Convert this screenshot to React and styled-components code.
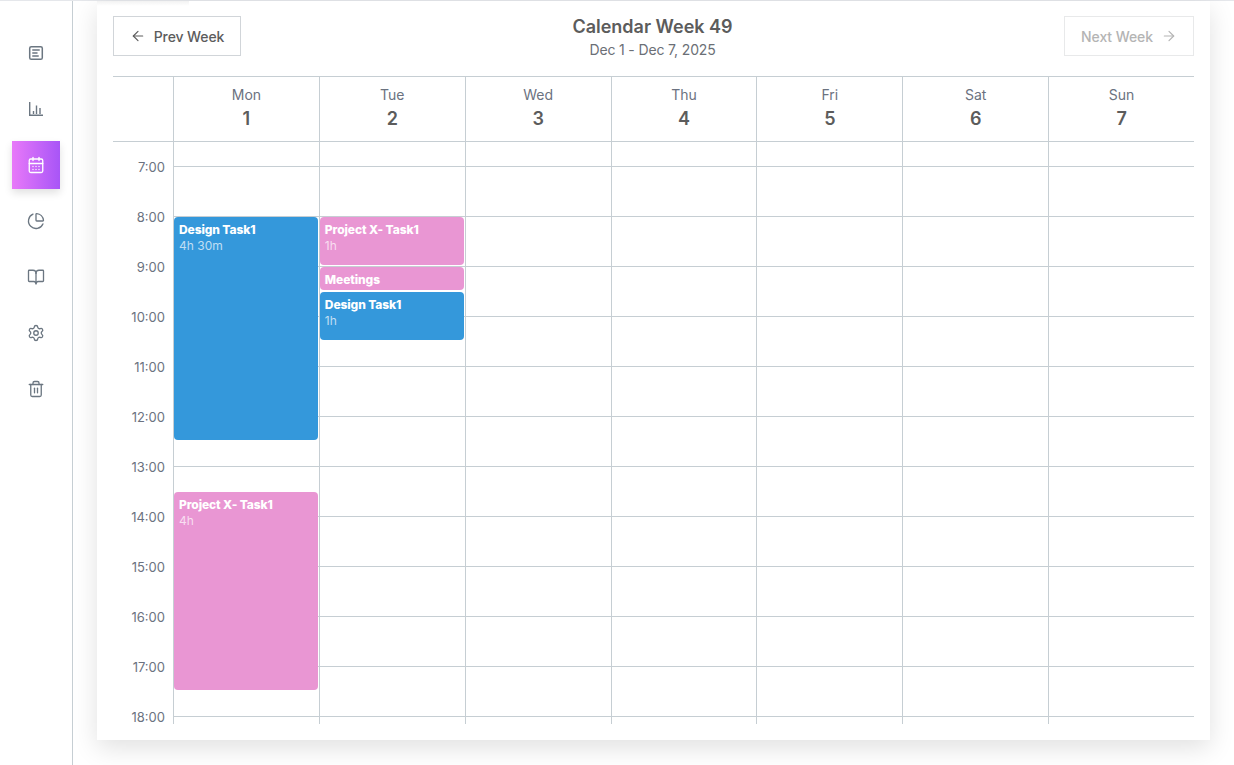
import React from 'react';
import styled, { createGlobalStyle } from 'styled-components';
import {
  ArrowLeft,
  ArrowRight,
  BookOpen,
  CalendarDays,
  ChartPie,
  Settings,
  Trash2,
} from 'lucide-react';

const HOUR = 50;
const GRID_START = 7;
const LINE = '#c6ced3';

const GlobalStyle = createGlobalStyle`
  html, body {
    margin: 0;
    height: 100%;
    background: #fff;
    overflow: hidden;
  }
  body {
    font-family: 'Inter', 'Liberation Sans', sans-serif;
    color: #5c5c5c;
  }
  * { box-sizing: border-box; }
`;

const Page = styled.div`
  display: flex;
  height: 765px;
  border-top: 1px solid #e5e7eb;
`;

const Sidebar = styled.nav`
  flex: 0 0 73px;
  display: flex;
  flex-direction: column;
  gap: 8px;
  align-items: center;
  padding-top: 28px;
  border-right: 1px solid ${LINE};
`;

const NavItem = styled.a`
  width: 48px;
  height: 48px;
  display: flex;
  align-items: center;
  justify-content: center;
  color: ${(p) => (p.$active ? '#fff' : '#6b7681')};
  background: ${(p) => (p.$active ? 'linear-gradient(90deg, #e879f9, #a855f7)' : 'transparent')};
  box-shadow: ${(p) => (p.$active ? '0 4px 8px rgba(0, 0, 0, 0.12)' : 'none')};
`;

const Main = styled.main`
  flex: 1;
  padding: 0 24px;
`;

const Card = styled.section`
  position: relative;
  height: 739px;
  padding: 15px 16px 0;
  background: #fff;
  box-shadow: 0 8px 24px rgba(0, 0, 0, 0.12);

  &::before {
    content: '';
    position: absolute;
    top: 0;
    left: 0;
    width: 92px;
    height: 5px;
    background: linear-gradient(180deg, rgba(0, 0, 0, 0.05), rgba(0, 0, 0, 0));
  }
`;

const TopBar = styled.header`
  display: flex;
  justify-content: space-between;
  align-items: flex-start;
  height: 60px;
`;

const WeekButton = styled.button`
  width: ${(p) => (p.disabled ? '130px' : '128px')};
  height: 40px;
  display: flex;
  align-items: center;
  justify-content: center;
  gap: 8px;
  padding: 0;
  background: #fff;
  border: 1px solid ${(p) => (p.disabled ? '#e8e9ea' : '#d1d5d9')};
  color: ${(p) => (p.disabled ? '#b4b4b4' : '#5c5c5c')};
  font: 500 14px 'Inter', 'Liberation Sans', sans-serif;
  letter-spacing: -0.1px;
`;

const Heading = styled.div`
  text-align: center;
`;

const Title = styled.h1`
  margin: 0;
  font-size: 18px;
  line-height: 22px;
  font-weight: 600;
  color: #5c5c5c;
`;

const Range = styled.p`
  margin: 2px 0 0;
  font-size: 14px;
  line-height: 20px;
  letter-spacing: -0.15px;
  color: #6b6f76;
`;

const Grid = styled.div`
  display: grid;
  grid-template-columns: 60px repeat(7, 1fr);
`;

const Corner = styled.div`
  height: 66px;
  border-top: 1px solid ${LINE};
  border-bottom: 1px solid ${LINE};
`;

const DayHead = styled.div`
  height: 66px;
  display: flex;
  flex-direction: column;
  align-items: center;
  padding-top: 9px;
  border-top: 1px solid ${LINE};
  border-bottom: 1px solid ${LINE};
  border-left: 1px solid ${LINE};
`;

const DayName = styled.span`
  font-size: 14px;
  line-height: 18px;
  color: #6b7280;
`;

const DayNumber = styled.span`
  margin-top: 1px;
  font-size: 18px;
  line-height: 28px;
  font-weight: 600;
  color: #5c5c5c;
`;

const TimeColumn = styled.div`
  height: 582px;
`;

const TimeLabel = styled.div`
  height: ${HOUR}px;
  padding: 1px 8px 0 0;
  margin-top: ${(p) => (p.$first ? '-1px' : '0')};
  display: flex;
  align-items: center;
  justify-content: flex-end;
  font-size: 13px;
  color: #6b7280;
`;

const DayColumn = styled.div`
  position: relative;
  height: 582px;
  border-left: 1px solid ${LINE};
`;

const HourCell = styled.div`
  height: ${(p) => (p.$first ? HOUR / 2 : HOUR)}px;
  border-bottom: 1px solid ${LINE};
`;

const Event = styled.div`
  position: absolute;
  left: 0;
  right: 1px;
  padding: 5px;
  overflow: hidden;
  border-radius: 4px;
  font-size: 12px;
  line-height: 16px;
  background: ${(p) => (p.$kind === 'design' ? '#3498db' : '#e996d3')};
`;

const EventTitle = styled.div`
  font-weight: 800;
  letter-spacing: -0.1px;
  color: #fff;
`;

const EventLength = styled.div`
  color: rgba(255, 255, 255, 0.7);
`;

const NotesIcon = () => (
  <svg width="18" height="18" viewBox="0 0 18 18" fill="none" stroke="currentColor" strokeWidth="1.5" strokeLinecap="round">
    <rect x="2.7" y="2.7" width="12.6" height="12.6" rx="1.6" />
    <path d="M5.8 6h6.4M5.8 9h4.2M5.8 12h5.4" />
  </svg>
);

const BarsIcon = () => (
  <svg width="18" height="18" viewBox="0 0 18 18" fill="none" stroke="currentColor" strokeWidth="1.4">
    <path d="M2.7 2v13.3H16" />
    <path d="M6.5 11v3M9.5 5.5V14M13 8v6" />
  </svg>
);

const navIcons = [
  <NotesIcon key="notes" />,
  <BarsIcon key="chart" />,
  <CalendarDays key="calendar" size={18} strokeWidth={1.75} />,
  <ChartPie key="pie" size={18} strokeWidth={1.75} />,
  <BookOpen key="book" size={18} strokeWidth={1.75} />,
  <Settings key="settings" size={18} strokeWidth={1.75} />,
  <Trash2 key="trash" size={18} strokeWidth={1.75} />,
];

const days = [
  ['Mon', 1],
  ['Tue', 2],
  ['Wed', 3],
  ['Thu', 4],
  ['Fri', 5],
  ['Sat', 6],
  ['Sun', 7],
];

const hours = Array.from({ length: 12 }, (_, i) => i + GRID_START);

const events = {
  1: [
    { title: 'Design Task1', length: '4h 30m', kind: 'design', start: 8, hours: 4.5 },
    { title: 'Project X- Task1', length: '4h', kind: 'project', start: 13.5, hours: 4 },
  ],
  2: [
    { title: 'Project X- Task1', length: '1h', kind: 'project', start: 8, hours: 1 },
    { title: 'Meetings', kind: 'project', start: 9, hours: 0.5 },
    { title: 'Design Task1', length: '1h', kind: 'design', start: 9.5, hours: 1 },
  ],
};

const eventPos = (e) => ({
  top: (e.start - GRID_START) * HOUR + HOUR / 2,
  height: e.hours * HOUR - 2,
});

const App = () => (
  <>
    <GlobalStyle />
    <Page>
      <Sidebar>
        {navIcons.map((icon, i) => (
          <NavItem key={i} $active={i === 2}>
            {icon}
          </NavItem>
        ))}
      </Sidebar>
      <Main>
        <Card>
          <TopBar>
            <WeekButton>
              <ArrowLeft size={16} strokeWidth={1.75} />
              Prev Week
            </WeekButton>
            <Heading>
              <Title>Calendar Week 49</Title>
              <Range>Dec 1 - Dec 7, 2025</Range>
            </Heading>
            <WeekButton disabled>
              Next Week
              <ArrowRight size={16} strokeWidth={1.75} />
            </WeekButton>
          </TopBar>
          <Grid>
            <Corner />
            {days.map(([name, num]) => (
              <DayHead key={name}>
                <DayName>{name}</DayName>
                <DayNumber>{num}</DayNumber>
              </DayHead>
            ))}
            <TimeColumn>
              {hours.map((h, i) => (
                <TimeLabel key={h} $first={i === 0}>
                  {h}:00
                </TimeLabel>
              ))}
            </TimeColumn>
            {days.map(([name, num]) => (
              <DayColumn key={name}>
                {hours.map((h, i) => (
                  <HourCell key={h} $first={i === 0} />
                ))}
                {(events[num] || []).map((e) => (
                  <Event key={e.title} $kind={e.kind} style={eventPos(e)}>
                    <EventTitle>{e.title}</EventTitle>
                    {e.length && <EventLength>{e.length}</EventLength>}
                  </Event>
                ))}
              </DayColumn>
            ))}
          </Grid>
        </Card>
      </Main>
    </Page>
  </>
);

export default App;
